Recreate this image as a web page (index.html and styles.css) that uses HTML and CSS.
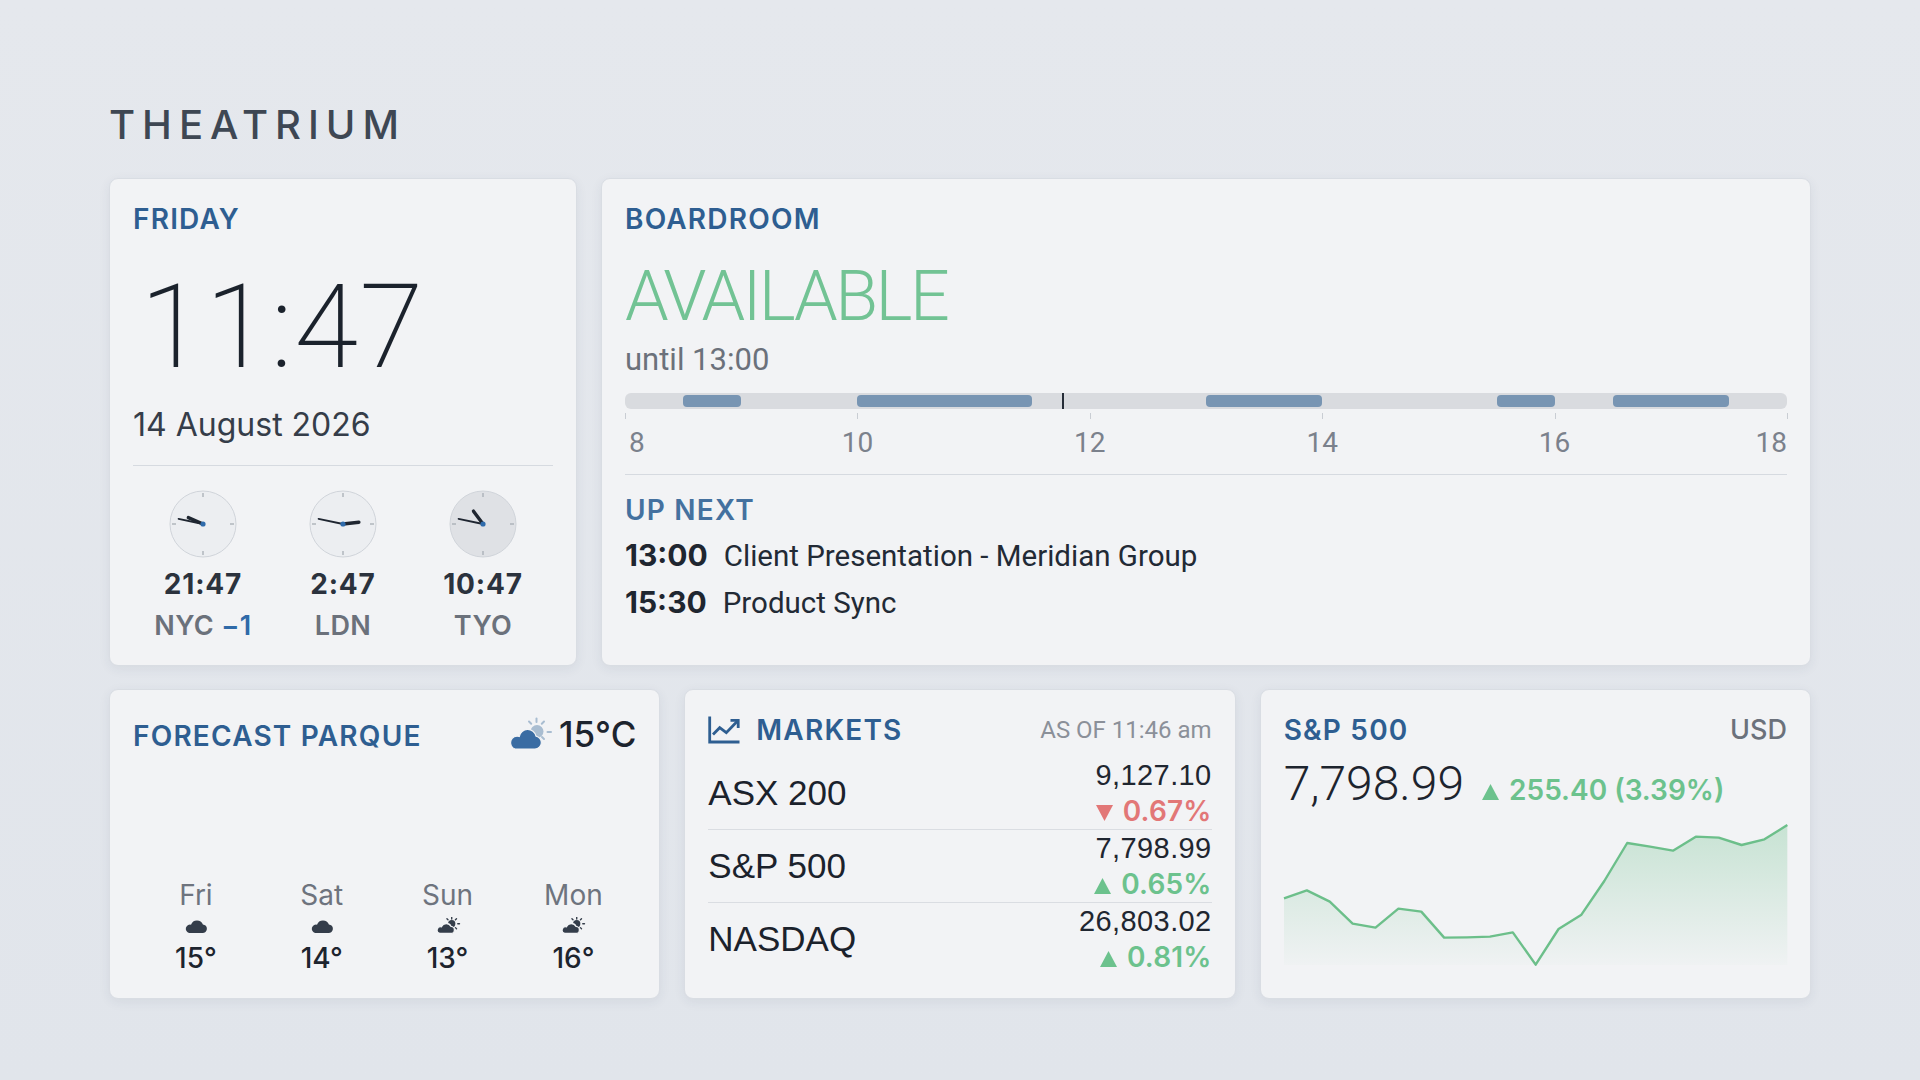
FILE: index.html
```html
<!DOCTYPE html>
<html lang="en">
<head>
<meta charset="utf-8">
<title>Theatrium</title>
<link rel="stylesheet" href="styles.css">
</head>
<body>
<main class="dash">
  <h1 class="brand">THEATRIUM</h1>

  <section class="row-top">
    <article class="card clock-card">
      <div class="label">FRIDAY</div>
      <div class="big-time">11:47</div>
      <div class="date">14 August 2026</div>
      <div class="rule"></div>
      <div class="zones">
        <div class="zone">
          <svg class="dial" viewBox="-34 -34 68 68">
            <circle class="face" r="33"/>
            <g class="ticks"><line x1="0" y1="-31" x2="0" y2="-27"/><line x1="0" y1="27" x2="0" y2="31"/><line x1="-31" y1="0" x2="-27" y2="0"/><line x1="27" y1="0" x2="31" y2="0"/></g>
            <line class="hour" x1="0" y1="0" x2="0" y2="-16" transform="rotate(293.5)"/>
            <line class="min" x1="0" y1="0" x2="0" y2="-25" transform="rotate(282)"/>
            <circle class="pin" r="2.6"/>
          </svg>
          <div class="zone-time">21:47</div>
          <div class="zone-city">NYC <span class="offset">−1</span></div>
        </div>
        <div class="zone">
          <svg class="dial" viewBox="-34 -34 68 68">
            <circle class="face" r="33"/>
            <g class="ticks"><line x1="0" y1="-31" x2="0" y2="-27"/><line x1="0" y1="27" x2="0" y2="31"/><line x1="-31" y1="0" x2="-27" y2="0"/><line x1="27" y1="0" x2="31" y2="0"/></g>
            <line class="hour" x1="0" y1="0" x2="0" y2="-16" transform="rotate(83.5)"/>
            <line class="min" x1="0" y1="0" x2="0" y2="-25" transform="rotate(282)"/>
            <circle class="pin" r="2.6"/>
          </svg>
          <div class="zone-time">2:47</div>
          <div class="zone-city">LDN</div>
        </div>
        <div class="zone">
          <svg class="dial night" viewBox="-34 -34 68 68">
            <circle class="face" r="33"/>
            <g class="ticks"><line x1="0" y1="-31" x2="0" y2="-27"/><line x1="0" y1="27" x2="0" y2="31"/><line x1="-31" y1="0" x2="-27" y2="0"/><line x1="27" y1="0" x2="31" y2="0"/></g>
            <line class="hour" x1="0" y1="0" x2="0" y2="-16" transform="rotate(323.5)"/>
            <line class="min" x1="0" y1="0" x2="0" y2="-25" transform="rotate(282)"/>
            <circle class="pin" r="2.6"/>
          </svg>
          <div class="zone-time">10:47</div>
          <div class="zone-city">TYO</div>
        </div>
      </div>
    </article>

    <article class="card room-card">
      <div class="label">BOARDROOM</div>
      <div class="status">AVAILABLE</div>
      <div class="until">until 13:00</div>
      <div class="timeline">
        <span class="busy" style="left:5%;width:5%"></span>
        <span class="busy" style="left:20%;width:15%"></span>
        <span class="busy" style="left:50%;width:10%"></span>
        <span class="busy" style="left:75%;width:5%"></span>
        <span class="busy" style="left:85%;width:10%"></span>
        <span class="now" style="left:37.7%"></span>
      </div>
      <div class="axis">
        <span class="tick" style="left:0%"></span>
        <span class="tick" style="left:20%"></span>
        <span class="tick" style="left:40%"></span>
        <span class="tick" style="left:60%"></span>
        <span class="tick" style="left:80%"></span>
        <span class="tick" style="left:100%"></span>
        <span class="hr first" style="left:0%">8</span>
        <span class="hr" style="left:20%">10</span>
        <span class="hr" style="left:40%">12</span>
        <span class="hr" style="left:60%">14</span>
        <span class="hr" style="left:80%">16</span>
        <span class="hr last" style="left:100%">18</span>
      </div>
      <div class="rule rule-room"></div>
      <div class="label label-soft">UP NEXT</div>
      <div class="events">
        <div class="event"><span class="event-time">13:00</span><span class="event-title">Client Presentation - Meridian Group</span></div>
        <div class="event"><span class="event-time">15:30</span><span class="event-title">Product Sync</span></div>
      </div>
    </article>
  </section>

  <section class="row-bottom">
    <article class="card forecast-card">
      <div class="fc-head">
        <div class="label">FORECAST PARQUE</div>
        <div class="now-temp">
          <svg class="wx-big" viewBox="0 0 44 34">
            <g class="sun-rays"><line x1="28.5" y1="1.5" x2="28.5" y2="5"/><line x1="21" y1="4.5" x2="23.2" y2="6.7"/><line x1="36" y1="4.5" x2="33.8" y2="6.7"/><line x1="39.5" y1="15" x2="43" y2="15"/><line x1="36" y1="22" x2="34" y2="20"/></g>
            <circle class="sun" cx="29" cy="14.5" r="6.5"/>
            <path class="cloud-big" d="M7 32 H27 a6.5 6.5 0 0 0 1-12.9 A8.5 8.5 0 0 0 11.3 19.5 A6.3 6.3 0 0 0 7 32 Z"/>
          </svg>
          <span>15°C</span>
        </div>
      </div>
      <div class="days">
        <div class="day">
          <div class="day-name">Fri</div>
          <svg class="wx" viewBox="0 0 24 16"><path class="cl" d="M5.5 15 H18 a4 4 0 0 0 .5-8 A6 6 0 0 0 7.3 7.2 A4 4 0 0 0 5.5 15Z"/></svg>
          <div class="day-temp">15°</div>
        </div>
        <div class="day">
          <div class="day-name">Sat</div>
          <svg class="wx" viewBox="0 0 24 16"><path class="cl" d="M5.5 15 H18 a4 4 0 0 0 .5-8 A6 6 0 0 0 7.3 7.2 A4 4 0 0 0 5.5 15Z"/></svg>
          <div class="day-temp">14°</div>
        </div>
        <div class="day">
          <div class="day-name">Sun</div>
          <svg class="wx" viewBox="0 0 24 16">
            <g class="rays"><line x1="15.5" y1="0.3" x2="15.5" y2="1.9"/><line x1="11" y1="1.6" x2="12" y2="2.6"/><line x1="20" y1="1.6" x2="19" y2="2.6"/><line x1="21.2" y1="6.3" x2="22.8" y2="6.3"/><line x1="20" y1="11" x2="19" y2="10"/></g>
            <circle class="cl" cx="15.5" cy="6.3" r="3.4"/>
            <path class="cl cut" d="M4.2 15.5 H14.5 a3.3 3.3 0 0 0 .4-6.6 A5 5 0 0 0 5.8 9.2 A3.2 3.2 0 0 0 4.2 15.5Z"/>
          </svg>
          <div class="day-temp">13°</div>
        </div>
        <div class="day">
          <div class="day-name">Mon</div>
          <svg class="wx" viewBox="0 0 24 16">
            <g class="rays"><line x1="15.5" y1="0.3" x2="15.5" y2="1.9"/><line x1="11" y1="1.6" x2="12" y2="2.6"/><line x1="20" y1="1.6" x2="19" y2="2.6"/><line x1="21.2" y1="6.3" x2="22.8" y2="6.3"/><line x1="20" y1="11" x2="19" y2="10"/></g>
            <circle class="cl" cx="15.5" cy="6.3" r="3.4"/>
            <path class="cl cut" d="M4.2 15.5 H14.5 a3.3 3.3 0 0 0 .4-6.6 A5 5 0 0 0 5.8 9.2 A3.2 3.2 0 0 0 4.2 15.5Z"/>
          </svg>
          <div class="day-temp">16°</div>
        </div>
      </div>
    </article>

    <article class="card markets-card">
      <div class="mk-head">
        <div class="mk-title">
          <svg class="mk-icon" viewBox="0 0 32 28">
            <path d="M1.7 0.5 V26 H31.5"/>
            <path d="M5 18.5 L11.7 11.7 L18.3 16.7 L29.3 5.2"/>
            <path d="M22.5 4.3 H30.2 V12"/>
          </svg>
          <span class="label">MARKETS</span>
        </div>
        <span class="asof">AS OF 11:46 am</span>
      </div>
      <div class="mk-row">
        <span class="mk-name">ASX 200</span>
        <div class="mk-vals">
          <div class="mk-price">9,127.10</div>
          <div class="mk-chg down"><svg class="tri" viewBox="0 0 17 16"><polygon points="0,0 17,0 8.5,16"/></svg>0.67%</div>
        </div>
      </div>
      <div class="mk-row">
        <span class="mk-name">S&amp;P 500</span>
        <div class="mk-vals">
          <div class="mk-price">7,798.99</div>
          <div class="mk-chg up"><svg class="tri" viewBox="0 0 17 16"><polygon points="8.5,0 17,16 0,16"/></svg>0.65%</div>
        </div>
      </div>
      <div class="mk-row">
        <span class="mk-name">NASDAQ</span>
        <div class="mk-vals">
          <div class="mk-price">26,803.02</div>
          <div class="mk-chg up"><svg class="tri" viewBox="0 0 17 16"><polygon points="8.5,0 17,16 0,16"/></svg>0.81%</div>
        </div>
      </div>
    </article>

    <article class="card sp-card">
      <div class="sp-head">
        <span class="label">S&amp;P 500</span>
        <span class="usd">USD</span>
      </div>
      <div class="sp-quote">
        <span class="sp-price">7,798.99</span><span class="sp-chg"><svg class="tri" viewBox="0 0 17 16"><polygon points="8.5,0 17,16 0,16"/></svg>255.40 (3.39%)</span>
      </div>
      <svg class="sp-chart" viewBox="0 0 1435 420" preserveAspectRatio="none">
        <defs>
          <linearGradient id="spfill" x1="0" y1="0" x2="0" y2="1">
            <stop offset="0" stop-color="#6cc08b" stop-opacity="0.32"/>
            <stop offset="1" stop-color="#6cc08b" stop-opacity="0.02"/>
          </linearGradient>
        </defs>
        <path class="area" d="M0,220 L65.2,196 L130.5,230 L195.7,296 L260.9,308 L326.2,251 L391.4,260 L456.6,338 L521.8,337 L587.1,335 L652.3,322 L717.5,419 L782.8,312 L848,269 L913.2,168 L978.5,54 L1043.7,65 L1108.9,77 L1174.1,35 L1239.4,38 L1304.6,60 L1369.8,43 L1435,0 L1435,420 L0,420 Z"/>
        <path class="line" d="M0,220 L65.2,196 L130.5,230 L195.7,296 L260.9,308 L326.2,251 L391.4,260 L456.6,338 L521.8,337 L587.1,335 L652.3,322 L717.5,419 L782.8,312 L848,269 L913.2,168 L978.5,54 L1043.7,65 L1108.9,77 L1174.1,35 L1239.4,38 L1304.6,60 L1369.8,43 L1435,0"/>
      </svg>
    </article>
  </section>
</main>
</body>
</html>
```

FILE: styles.css
```css
* { box-sizing: border-box; }

html, body { height: 100%; }

body {
  margin: 0;
  background: linear-gradient(180deg, #e5e8ed 0%, #e1e5eb 100%);
  font-family: Inter, "Noto Sans", "Liberation Sans", sans-serif;
  color: #1e252f;
}

.dash {
  padding: 101px 109px 0;
}

.brand {
  margin: 0 0 29px;
  font: 500 40px/48px Inter, sans-serif;
  letter-spacing: 7px;
  color: #3e4753;
}

.row-top {
  display: grid;
  grid-template-columns: 468px 1fr;
  gap: 24px;
}

.row-bottom {
  display: grid;
  grid-template-columns: repeat(3, 1fr);
  gap: 24px;
  margin-top: 23px;
}

.card {
  background: #f2f3f5;
  border: 1px solid #d9dde3;
  border-radius: 9px;
  box-shadow: 0 3px 12px rgba(40, 55, 80, 0.07);
  padding: 23px;
}

.label {
  font: 600 28px/34px Inter, sans-serif;
  letter-spacing: 1.2px;
  color: #2e5e91;
}

.label-soft { color: #44719f; }

/* clock card */
.big-time {
  margin-top: 33px;
  padding-left: 7px;
  font: 200 116px/116px Roboto, sans-serif;
  letter-spacing: 1.5px;
  color: #1b222c;
}

.date {
  margin-top: 21px;
  font: 400 32px/38px Inter, sans-serif;
  color: #353d49;
}

.rule {
  height: 1px;
  background: #d6dae0;
  margin: 21px 0 24px;
}

.zones {
  display: grid;
  grid-template-columns: repeat(3, 1fr);
  text-align: center;
}

.dial {
  display: block;
  width: 68px;
  height: 68px;
  margin: 0 auto;
}

.dial .face { fill: #eceef1; stroke: #d0d4da; stroke-width: 1; }
.dial.night .face { fill: #dfe1e5; }
.dial .ticks line { stroke: #a2a8b0; stroke-width: 1.2; }
.dial .hour { stroke: #1f2631; stroke-width: 3.4; stroke-linecap: round; }
.dial .min { stroke: #1f2631; stroke-width: 1.8; stroke-linecap: round; }
.dial .pin { fill: #2f6bab; }

.zone-time {
  margin-top: 10px;
  font: 700 28px/32px Inter, sans-serif;
  letter-spacing: 0.8px;
  color: #2b323d;
}

.zone-city {
  margin-top: 10px;
  font: 600 27px/32px Inter, sans-serif;
  letter-spacing: 0.4px;
  color: #6b717b;
}

.zone-city .offset { color: #2f6aa8; }

/* boardroom */
.status {
  margin-top: 25px;
  font: 300 70px/70px Roboto, sans-serif;
  letter-spacing: -2.5px;
  color: #72c394;
}

.until {
  margin-top: 11px;
  font: 400 31px/36px Roboto, sans-serif;
  color: #6b717b;
}

.timeline {
  position: relative;
  margin-top: 15px;
  height: 16px;
  background: #d9dbdf;
  border-radius: 6px;
}

.busy {
  position: absolute;
  top: 2px;
  bottom: 2px;
  background: #7895b3;
  border-radius: 4px;
}

.now {
  position: absolute;
  top: 0;
  bottom: 0;
  width: 2px;
  margin-left: -1px;
  background: #262d38;
}

.axis {
  position: relative;
  height: 50px;
}

.tick {
  position: absolute;
  top: 4px;
  width: 1px;
  height: 6px;
  background: #c9cdd3;
}

.hr {
  position: absolute;
  top: 18px;
  font: 400 28px/32px Roboto, sans-serif;
  color: #7b818c;
  transform: translateX(-50%);
}

.hr.first { transform: translateX(4px); }
.hr.last { transform: translateX(-100%); }

.rule-room { margin: 15px 0 18px; }

.events { margin-top: 5px; }

.event {
  display: flex;
  align-items: baseline;
  gap: 16px;
  line-height: 46px;
}

.event-time {
  font: 700 30px/46px Inter, sans-serif;
  color: #1f2630;
}

.event-title {
  font: 400 29.5px/46px Roboto, sans-serif;
  color: #222a35;
}

/* forecast */
.forecast-card {
  display: flex;
  flex-direction: column;
}

.fc-head {
  display: flex;
  justify-content: space-between;
  align-items: center;
  height: 42px;
}

.fc-head .label { margin-top: 4px; }

.now-temp {
  display: flex;
  align-items: center;
  gap: 7px;
  font: 500 35px/42px Inter, sans-serif;
  color: #1d242e;
}

.wx-big { width: 44px; height: 34px; display: block; }
.wx-big .sun { fill: #a9bdd1; }
.wx-big .sun-rays line { stroke: #a9bdd1; stroke-width: 2; stroke-linecap: round; }
.wx-big .cloud-big { fill: #3a6ca3; stroke: #f2f3f5; stroke-width: 1.2; }

.days {
  margin-top: auto;
  display: grid;
  grid-template-columns: repeat(4, 1fr);
  text-align: center;
}

.day-name {
  font: 400 28px/34px Inter, sans-serif;
  color: #6e747e;
}

.wx {
  display: block;
  width: 26px;
  height: 17px;
  margin: 5px auto 7px;
}

.wx .cl { fill: #343d4a; }
.wx .cut { stroke: #f2f3f5; stroke-width: 1.2; }
.wx .rays line { stroke: #343d4a; stroke-width: 1.3; stroke-linecap: round; }

.day-temp {
  font: 500 28px/34px Inter, sans-serif;
  color: #1d242e;
}

/* markets */
.mk-head {
  display: flex;
  justify-content: space-between;
  align-items: center;
  height: 34px;
  margin-bottom: 10px;
}

.mk-title {
  display: flex;
  align-items: center;
  gap: 16px;
}

.mk-icon {
  width: 32px;
  height: 28px;
  display: block;
  fill: none;
  stroke: #2e5e91;
  stroke-width: 2.8;
}

.asof {
  font: 400 24px/34px Roboto, sans-serif;
  color: #8b9099;
}

.mk-row {
  display: flex;
  justify-content: space-between;
  align-items: center;
  padding: 3px 0;
}

.mk-row + .mk-row { border-top: 1px solid #dadde2; }

.mk-name {
  font: 400 35px/40px "Liberation Sans", Arial, sans-serif;
  color: #1b222c;
}

.mk-vals { text-align: right; }

.mk-price {
  font: 400 29px/30px "Liberation Sans", Arial, sans-serif;
  letter-spacing: 0.4px;
  color: #1f2630;
}

.mk-chg {
  margin-top: 6px;
  font: 600 28px/30px Inter, sans-serif;
  letter-spacing: 0.2px;
}

.tri {
  display: inline-block;
  width: 17px;
  height: 16px;
  margin-right: 10px;
  vertical-align: baseline;
  fill: currentColor;
}

.down { color: #e27777; }
.up { color: #6cc28d; }

/* S&P */
.sp-head {
  display: flex;
  justify-content: space-between;
  align-items: center;
  height: 34px;
}

.usd {
  font: 500 27px/34px Inter, sans-serif;
  color: #6b717b;
}

.sp-quote {
  margin-top: 9px;
  white-space: nowrap;
}

.sp-price {
  font: 300 48px/56px Roboto, sans-serif;
  color: #1d242e;
}

.sp-chg {
  margin-left: 18px;
  font: 600 28px/34px Inter, sans-serif;
  color: #6cc28d;
}

.sp-chart {
  display: block;
  width: 100%;
  height: 140px;
  margin-top: 13px;
  overflow: visible;
}

.sp-chart .area { fill: url(#spfill); }
.sp-chart .line {
  fill: none;
  stroke: #6cbf8a;
  stroke-width: 2.4;
  stroke-linejoin: round;
  vector-effect: non-scaling-stroke;
}
```
